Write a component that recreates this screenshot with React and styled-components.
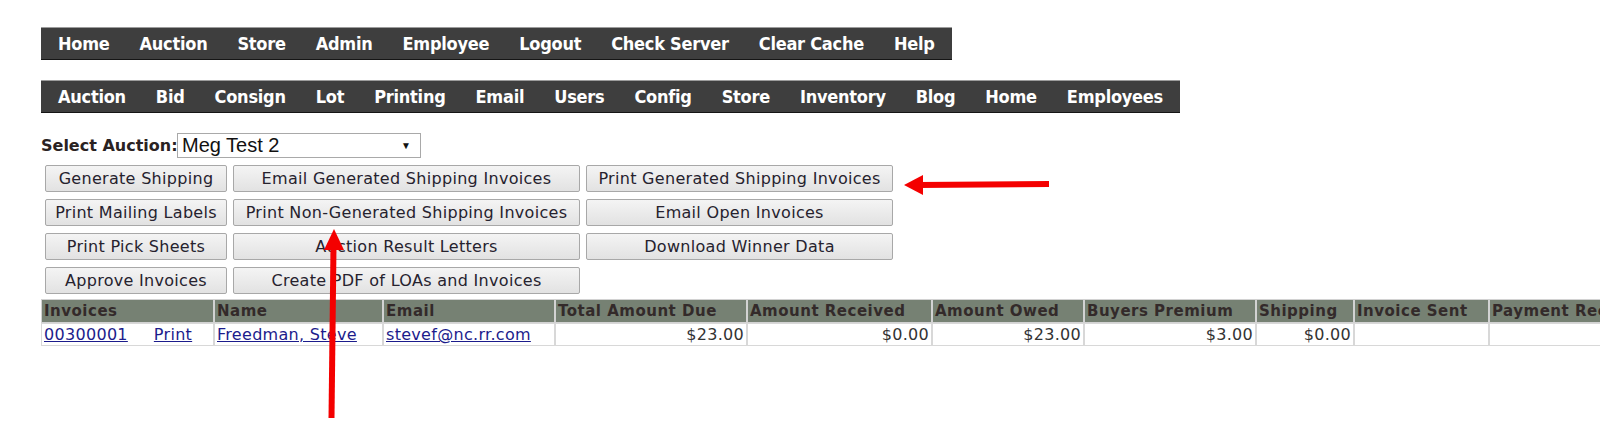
import React from "react";
import styled, { createGlobalStyle } from "styled-components";

const GlobalStyle = createGlobalStyle`
  html, body {
    margin: 0;
    padding: 0;
    background: #fff;
    overflow: hidden;
  }
  body {
    font-family: "DejaVu Sans", Verdana, sans-serif;
    font-size: 16px;
    color: #222;
  }
`;

const Page = styled.div`
  position: relative;
  width: 1600px;
  height: 437px;
  padding: 27px 0 0 41px;
  box-sizing: border-box;
`;

const Menus = styled.div`
  display: flex;
  flex-direction: column;
  align-items: flex-start;
  gap: 20px;
`;

const NavBar = styled.div`
  display: flex;
  height: 33px;
  box-sizing: border-box;
  padding: 0 2px;
  background: #3e3e3e;
  border-top: 1px solid #9c9c9c;
  border-bottom: 1px solid #151515;
`;

const NavItem = styled.a`
  display: flex;
  align-items: center;
  padding: 0 15px;
  color: #fff;
  font-family: "DejaVu Sans Condensed", "Liberation Sans", sans-serif;
  font-weight: bold;
  font-size: 18px;
  letter-spacing: -0.25px;
  text-decoration: none;
  white-space: nowrap;
`;

const SelectRow = styled.div`
  display: flex;
  align-items: center;
  margin-top: 20px;
  height: 25px;
`;

const Label = styled.label`
  width: 136px;
  font-weight: bold;
  font-size: 16px;
  color: #2a2222;
  white-space: nowrap;
`;

const SelectBox = styled.div`
  display: flex;
  align-items: center;
  justify-content: space-between;
  width: 244px;
  height: 25px;
  box-sizing: border-box;
  padding: 0 9px 0 4px;
  border: 1px solid #a9a9a9;
  background: #fff;
  font-family: "Liberation Sans", Arial, sans-serif;
  font-size: 20px;
  color: #111;
`;

const Caret = styled.span`
  font-size: 10px;
  color: #111;
`;

const ButtonGrid = styled.div`
  display: grid;
  grid-template-columns: 182px 347px 307px;
  grid-auto-rows: 27px;
  column-gap: 6px;
  row-gap: 7px;
  margin: 7px 0 0 4px;
`;

const Button = styled.button`
  height: 27px;
  padding: 0 2px;
  border: 1px solid #a8a8a8;
  border-radius: 2px;
  background: linear-gradient(#f4f4f4, #e2e2e2);
  font-family: "DejaVu Sans", Verdana, sans-serif;
  font-size: 16px;
  letter-spacing: 0.3px;
  color: #26222e;
  white-space: nowrap;
  cursor: pointer;
`;

const Table = styled.table`
  margin-top: 5px;
  border-collapse: separate;
  border-spacing: 0;
  table-layout: fixed;
  width: 1648px;
`;

const Th = styled.th`
  height: 24px;
  padding: 0 2px;
  box-sizing: border-box;
  background: #768173;
  border: 1px solid #d2d2d2;
  text-align: left;
  font-size: 15px;
  letter-spacing: 0.5px;
  font-weight: bold;
  color: #332a2a;
  white-space: nowrap;
  overflow: hidden;
`;

const Td = styled.td`
  height: 23px;
  padding: 0 2px;
  box-sizing: border-box;
  border: 1px solid #d8d8d8;
  font-size: 16px;
  letter-spacing: 0.3px;
  color: #333;
  white-space: nowrap;
  text-align: ${(props) => (props.$num ? "right" : "left")};
`;

const Link = styled.a`
  color: #1c1c8c;
  text-decoration: underline;
  margin-right: ${(props) => props.$gap || 0}px;
`;

const Overlay = styled.svg`
  position: absolute;
  top: 0;
  left: 0;
  pointer-events: none;
`;

const topMenu = ["Home", "Auction", "Store", "Admin", "Employee", "Logout", "Check Server", "Clear Cache", "Help"];
const subMenu = ["Auction", "Bid", "Consign", "Lot", "Printing", "Email", "Users", "Config", "Store", "Inventory", "Blog", "Home", "Employees"];

const buttons = [
  "Generate Shipping", "Email Generated Shipping Invoices", "Print Generated Shipping Invoices",
  "Print Mailing Labels", "Print Non-Generated Shipping Invoices", "Email Open Invoices",
  "Print Pick Sheets", "Auction Result Letters", "Download Winner Data",
  "Approve Invoices", "Create PDF of LOAs and Invoices",
];

const columns = [
  ["Invoices", 173], ["Name", 169], ["Email", 172], ["Total Amount Due", 192],
  ["Amount Received", 185], ["Amount Owed", 152], ["Buyers Premium", 172],
  ["Shipping", 98], ["Invoice Sent", 135], ["Payment Received", 200],
];

function App() {
  return (
    <Page>
      <GlobalStyle />
      <Menus>
        <NavBar>
          {topMenu.map((m) => <NavItem key={m}>{m}</NavItem>)}
        </NavBar>
        <NavBar>
          {subMenu.map((m, i) => <NavItem key={i}>{m}</NavItem>)}
        </NavBar>
      </Menus>

      <SelectRow>
        <Label>Select Auction:</Label>
        <SelectBox>
          Meg Test 2
          <Caret>▼</Caret>
        </SelectBox>
      </SelectRow>

      <ButtonGrid>
        {buttons.map((b) => <Button key={b}>{b}</Button>)}
      </ButtonGrid>

      <Table>
        <colgroup>
          {columns.map(([name, w]) => <col key={name} style={{ width: w }} />)}
        </colgroup>
        <thead>
          <tr>
            {columns.map(([name]) => <Th key={name}>{name}</Th>)}
          </tr>
        </thead>
        <tbody>
          <tr>
            <Td>
              <Link $gap={26}>00300001</Link>
              <Link>Print</Link>
            </Td>
            <Td><Link>Freedman, Steve</Link></Td>
            <Td><Link>stevef@nc.rr.com</Link></Td>
            <Td $num>$23.00</Td>
            <Td $num>$0.00</Td>
            <Td $num>$23.00</Td>
            <Td $num>$3.00</Td>
            <Td $num>$0.00</Td>
            <Td></Td>
            <Td></Td>
          </tr>
        </tbody>
      </Table>

      {/* red annotation arrows drawn over the screenshot */}
      <Overlay width="1600" height="437" viewBox="0 0 1600 437">
        <line x1="1049" y1="184" x2="918" y2="185" stroke="#f40000" strokeWidth="6" />
        <polygon points="904,185 923,175 923,195" fill="#f40000" />
        <line x1="331.5" y1="418" x2="333.5" y2="246" stroke="#f40000" strokeWidth="6" />
        <polygon points="334,229 324,250 344,250" fill="#f40000" />
      </Overlay>
    </Page>
  );
}

export default App;
